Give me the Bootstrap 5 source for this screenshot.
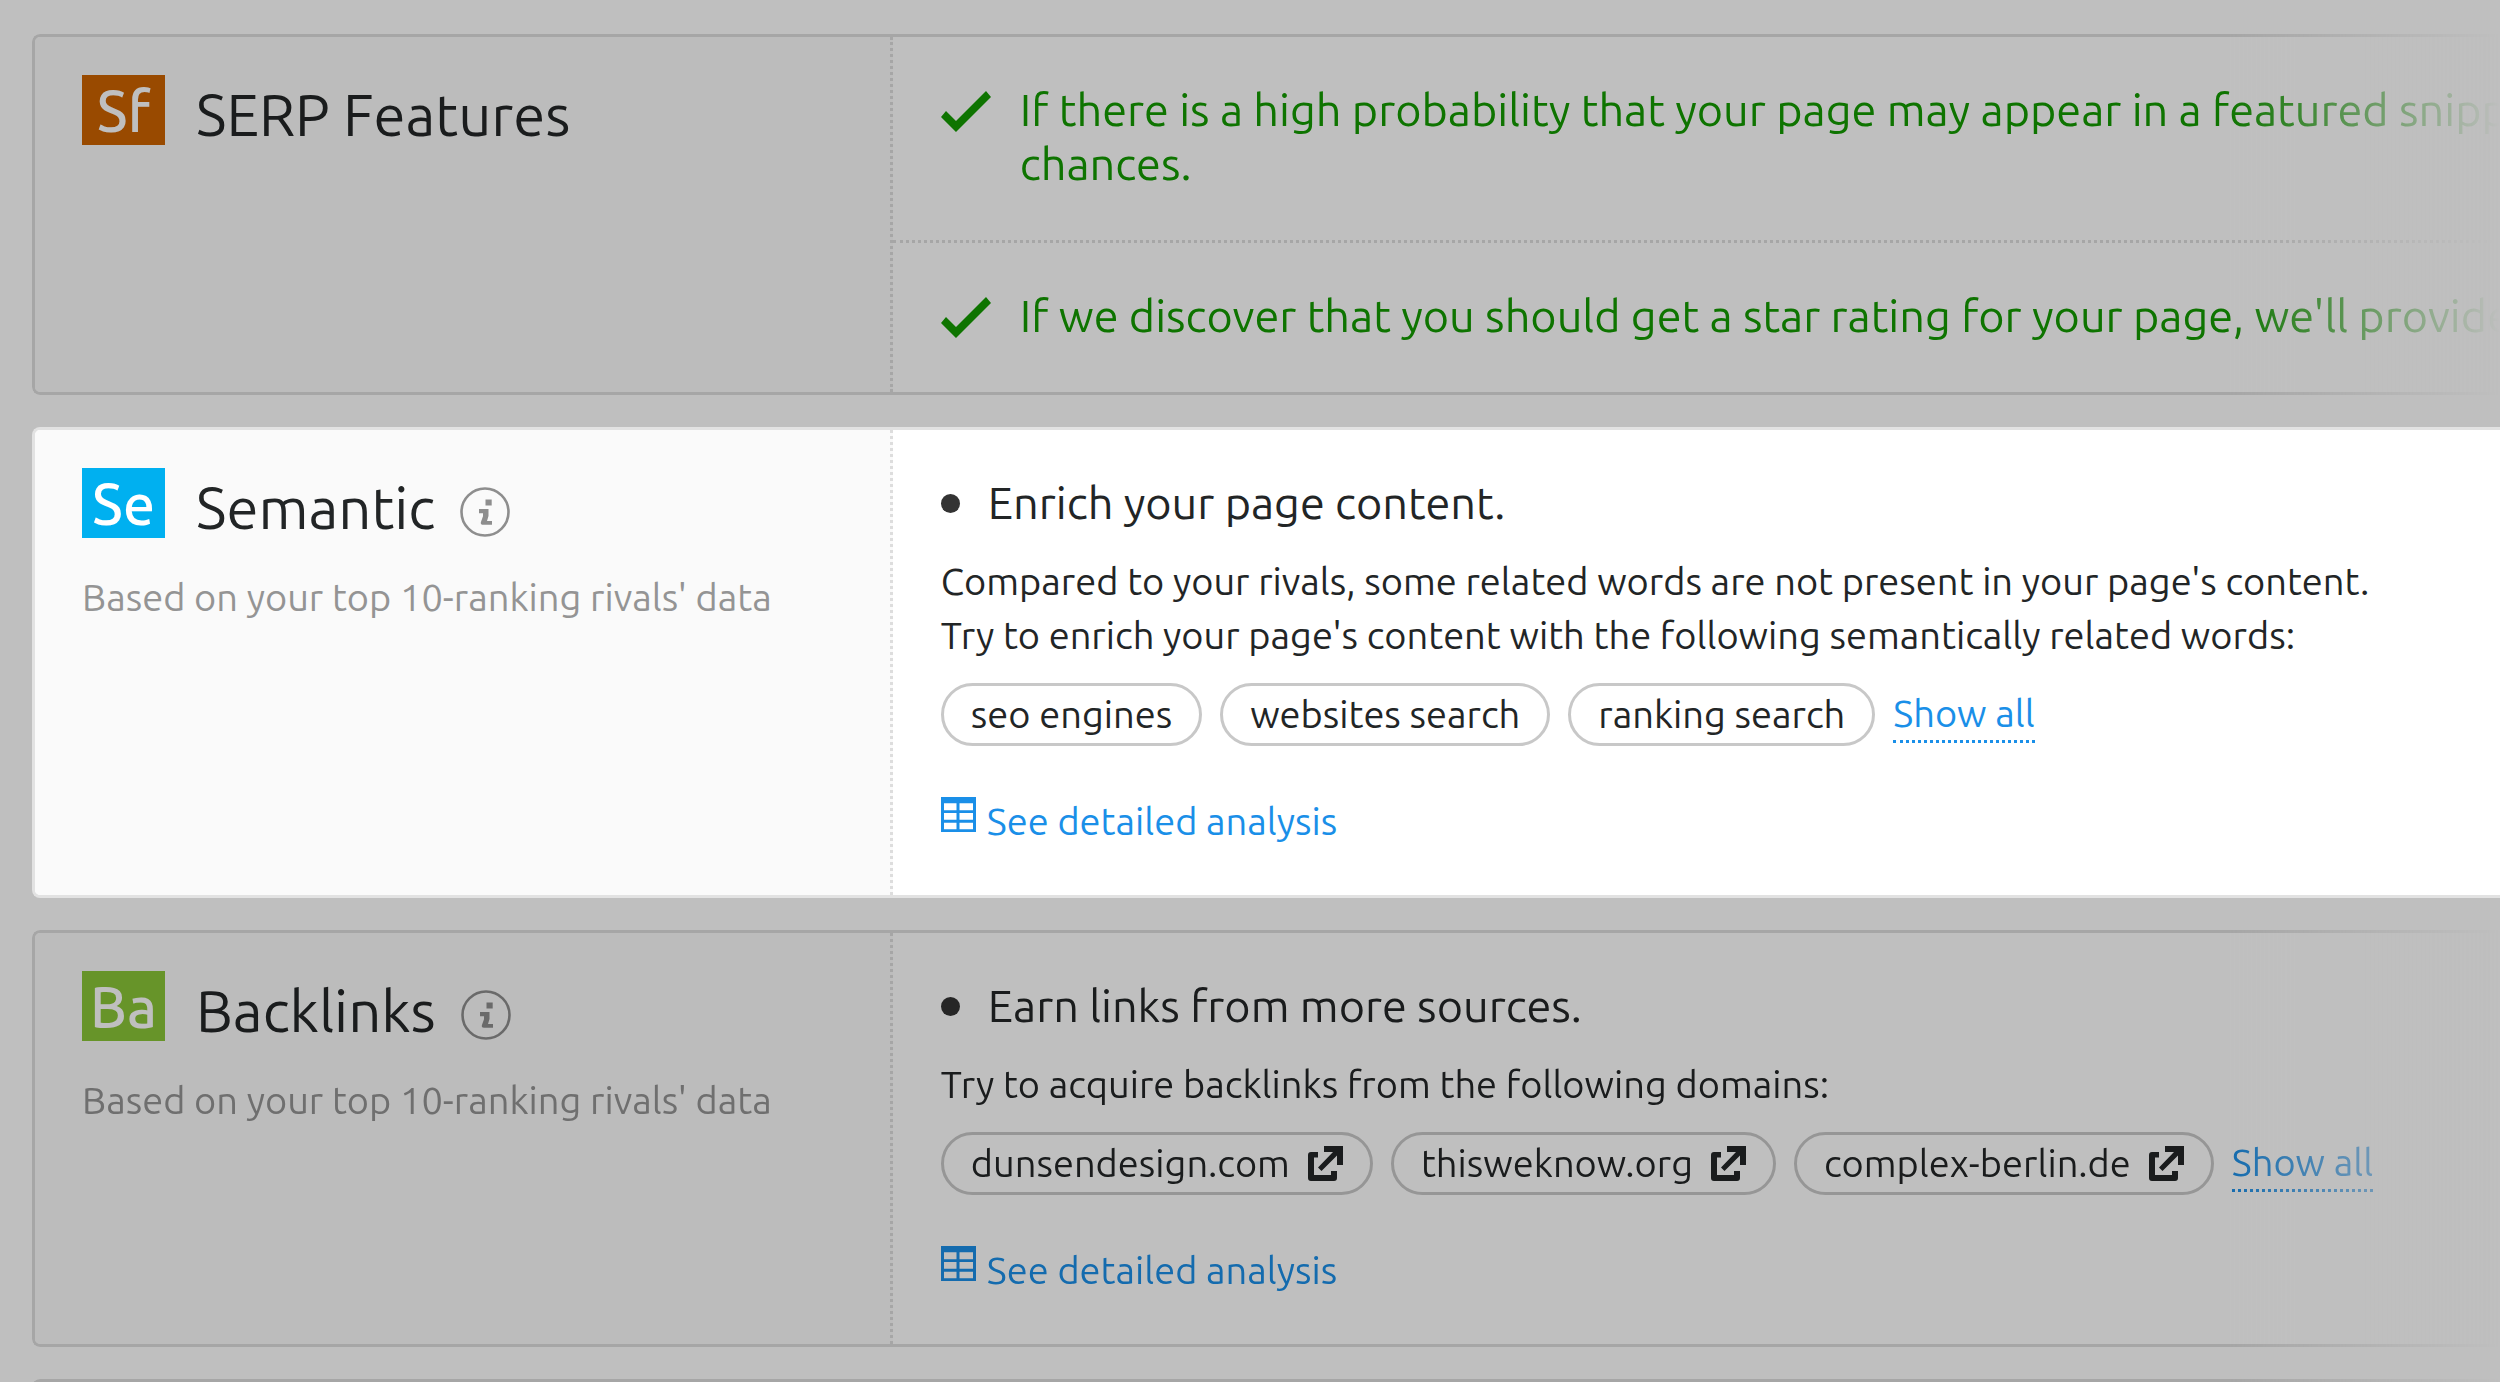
<!DOCTYPE html>
<html lang="en">
<head>
<meta charset="utf-8">
<meta name="viewport" content="width=device-width, initial-scale=1">
<title>On-page ideas</title>
<link rel="stylesheet" href="https://cdn.jsdelivr.net/npm/bootstrap@5.3.0/dist/css/bootstrap.min.css">
<style>
  :root { --ink: #222526; --line: #ddd; --pill-line: #c8c8c8; --quiet: #949494; --blue: #1a8fe8; --good: #139a00; }
  body { font-family: Ubuntu, "Noto Sans", sans-serif; font-size: 38px; line-height: 54px; color: var(--ink); background: #bfbfbf; overflow: hidden; }
  .ideas { gap: 32px; padding: 34px 0 0 32px; height: 100vh; overflow: hidden; }
  .idea { background: #fff; border: 3px solid var(--line); border-right: 0; border-radius: 8px 0 0 8px; flex: none; overflow: hidden; }
  .idea-dim { filter: brightness(.75); -webkit-mask-image: linear-gradient(to right, #000 89%, transparent); mask-image: linear-gradient(to right, #000 89%, transparent); }
  .idea-lit { border-color: #e2e2e2; }
  .idea-name { flex: 0 0 34.8%; background: #fafafa; border-right: 3px dotted var(--line); padding: 38px 24px 38px 47px; }
  .idea-body { min-width: 0; }
  .idea-part { padding: 46px 0 47px 48px; }
  .idea-part + .idea-part { border-top: 3px dotted var(--line); }
  .sym { width: 83px; height: 70px; color: #fff; font-size: 57px; font-weight: 500; line-height: 72px; text-align: center; flex: none; }
  .sym-sf { background: #cc6300; }
  .sym-se { background: #00b0f0; }
  .sym-ba { background: #89c536; }
  .idea-title { font-size: 58px; line-height: 70px; margin: 5px 0 0; font-weight: 400; }
  .head-row { gap: 31px; }
  .info { width: 50px; height: 50px; color: #8e8e8e; margin: 19px 0 0 -6px; line-height: 0; }
  .source { color: var(--quiet); margin: 27px 0 0; }
  .tip { font-size: 45px; }
  .tip-good { color: var(--good); gap: 29px; padding-bottom: 49px; }
  .tip-good svg { margin-top: 8px; }
  .dot { width: 19px; height: 19px; background: #333; border-radius: 50%; }
  .tip-row { gap: 28px; margin-bottom: 24px; }
  .pills { gap: 18px; margin-top: 21px; }
  .pill { --bs-btn-border-width: 3px; --bs-btn-border-color: var(--pill-line); --bs-btn-color: var(--ink); --bs-btn-font-size: 38px; --bs-btn-line-height: 57px; --bs-btn-padding-y: 0; --bs-btn-padding-x: 27px; gap: 18px; }
  .show-all { color: var(--blue); line-height: 53px; border-bottom: 3px dotted; text-decoration: none; }
  .detail { color: var(--blue); gap: 11px; margin-top: 48px; text-decoration: none; }
  .detail svg { margin-top: 3px; }
  svg { display: block; flex: none; }
</style>
<script src="https://cdn.jsdelivr.net/npm/bootstrap@5.3.0/dist/js/bootstrap.bundle.min.js"></script>
</head>
<body>
<svg class="d-none" aria-hidden="true">
  <symbol id="i-check" viewBox="0 0 50 41"><path fill="currentColor" d="M45 0l5 6-35 35L0 26l5-6 10 10z"/></symbol>
  <symbol id="i-info" viewBox="0 0 50 50"><circle cx="25" cy="25" r="23.5" fill="none" stroke="currentColor" stroke-width="2.6"/><path fill="currentColor" d="M25.500 12.500h6.200v6h-6.200zM19 22h9.500v7l-1.500 5h5v3.700H23c-2 0-2.600-1.200-2-3l2-5.500v-3h-4z"/></symbol>
  <symbol id="i-table" viewBox="0 0 35 35"><path fill="currentColor" fill-rule="evenodd" d="M0 0h35v35H0zM3 6.300v6.900h12.500V6.300zM18.500 6.300v6.900H32V6.300zM3 16v6.800h12.500V16zM18.500 16v6.800H32V16zM3 25.700v6.500h12.500v-6.500zM18.500 25.700v6.500H32v-6.500z"/></symbol>
  <symbol id="i-ext" viewBox="0 0 35 35"><path fill="currentColor" d="M16 0h19v19h-6v-9.500L13.500 25 10 21.500 25 6h-9zM3 6h7v5.500H6V29h17v-4h6v7a3 3 0 0 1-3 3H3a3 3 0 0 1-3-3V9a3 3 0 0 1 3-3z"/></symbol>
</svg>
<main class="ideas d-flex flex-column">
  <section class="idea idea-dim d-flex">
    <div class="idea-name">
      <div class="head-row d-flex">
        <div class="sym sym-sf">Sf</div>
        <h2 class="idea-title">SERP Features</h2>
      </div>
    </div>
    <div class="idea-body flex-fill text-nowrap">
      <div class="idea-part tip tip-good d-flex">
        <svg width="50" height="41"><use href="#i-check"/></svg>
        <div>If there is a high probability that your page may appear in a featured snippet<br>chances.</div>
      </div>
      <div class="idea-part tip tip-good d-flex">
        <svg width="50" height="41"><use href="#i-check"/></svg>
        <div>If we discover that you should get a star rating for your page, we'll provide</div>
      </div>
    </div>
  </section>

  <section class="idea idea-lit d-flex">
    <div class="idea-name">
      <div class="head-row d-flex">
        <div class="sym sym-se">Se</div>
        <h2 class="idea-title">Semantic</h2>
        <button type="button" class="info btn p-0 border-0" aria-label="About Semantic"><svg width="50" height="50"><use href="#i-info"/></svg></button>
      </div>
      <p class="source">Based on your top 10-ranking rivals' data</p>
    </div>
    <div class="idea-body idea-part flex-fill">
      <div class="tip-row tip d-flex align-items-center"><span class="dot"></span>Enrich your page content.</div>
      <div>Compared to your rivals, some related words are not present in your page's content.<br>Try to enrich your page's content with the following semantically related words:</div>
      <div class="pills d-flex align-items-center">
        <button type="button" class="pill btn rounded-pill">seo engines</button>
        <button type="button" class="pill btn rounded-pill">websites search</button>
        <button type="button" class="pill btn rounded-pill">ranking search</button>
        <a href="#" class="show-all">Show all</a>
      </div>
      <a href="#" class="detail d-inline-flex"><svg width="35" height="35"><use href="#i-table"/></svg>See detailed analysis</a>
    </div>
  </section>

  <section class="idea idea-dim d-flex">
    <div class="idea-name">
      <div class="head-row d-flex">
        <div class="sym sym-ba">Ba</div>
        <h2 class="idea-title">Backlinks</h2>
        <button type="button" class="info btn p-0 border-0" aria-label="About Backlinks"><svg width="50" height="50"><use href="#i-info"/></svg></button>
      </div>
      <p class="source">Based on your top 10-ranking rivals' data</p>
    </div>
    <div class="idea-body idea-part flex-fill">
      <div class="tip-row tip d-flex align-items-center"><span class="dot"></span>Earn links from more sources.</div>
      <div>Try to acquire backlinks from the following domains:</div>
      <div class="pills d-flex align-items-center">
        <a href="#" class="pill btn rounded-pill d-flex align-items-center">dunsendesign.com<svg width="35" height="35"><use href="#i-ext"/></svg></a>
        <a href="#" class="pill btn rounded-pill d-flex align-items-center">thisweknow.org<svg width="35" height="35"><use href="#i-ext"/></svg></a>
        <a href="#" class="pill btn rounded-pill d-flex align-items-center">complex-berlin.de<svg width="35" height="35"><use href="#i-ext"/></svg></a>
        <a href="#" class="show-all">Show all</a>
      </div>
      <a href="#" class="detail d-inline-flex"><svg width="35" height="35"><use href="#i-table"/></svg>See detailed analysis</a>
    </div>
  </section>

  <section class="idea idea-dim d-flex"><div class="idea-name"></div></section>
</main>
</body>
</html>
